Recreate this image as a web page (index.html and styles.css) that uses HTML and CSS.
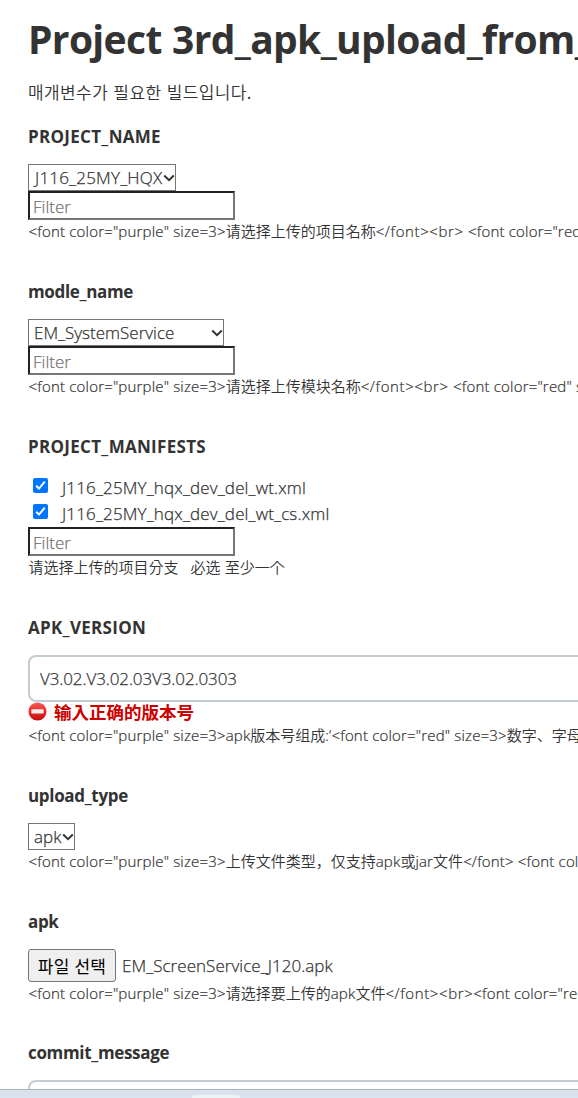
FILE: index.html
```
<!DOCTYPE html>
<html lang="ko">
<head>
<meta charset="utf-8">
<title>Project 3rd_apk_upload</title>
<link rel="stylesheet" href="styles.css">
</head>
<body>
<main class="form">
  <h1 class="title">Project 3rd_apk_upload_from_</h1>
  <p class="intro">매개변수가 필요한 빌드입니다.</p>

  <section class="field">
    <h2 class="label caps">PROJECT_NAME</h2>
    <div class="select project"><span>J116_25MY_HQX</span><svg class="arrow" viewBox="0 0 12 8"><path d="M1.2 1.5 6 6.2l4.8-4.7"/></svg></div>
    <input class="filter" placeholder="Filter">
    <p class="desc"><span class="l">&lt;font color="purple" size=3&gt;</span>请选择上传的项目名称<span class="l end">&lt;/font&gt;&lt;br&gt; </span><span class="l">&lt;font color="red</span></p>
  </section>

  <section class="field">
    <h2 class="label">modle_name</h2>
    <div class="select module"><span>EM_SystemService</span><svg class="arrow" viewBox="0 0 12 8"><path d="M1.2 1.5 6 6.2l4.8-4.7"/></svg></div>
    <input class="filter" placeholder="Filter">
    <p class="desc"><span class="l">&lt;font color="purple" size=3&gt;</span>请选择上传模块名称<span class="l end">&lt;/font&gt;&lt;br&gt; </span><span class="l">&lt;font color="red" s</span></p>
  </section>

  <section class="field">
    <h2 class="label caps">PROJECT_MANIFESTS</h2>
    <div class="checks">
      <label class="check"><svg class="box" viewBox="0 0 15 15"><rect width="15" height="15" rx="2"/><path d="M3.2 7.8 6 10.6l5.8-7"/></svg><span>J116_25MY_hqx_dev_del_wt.xml</span></label>
      <label class="check"><svg class="box" viewBox="0 0 15 15"><rect width="15" height="15" rx="2"/><path d="M3.2 7.8 6 10.6l5.8-7"/></svg><span>J116_25MY_hqx_dev_del_wt_cs.xml</span></label>
    </div>
    <input class="filter" placeholder="Filter">
    <p class="desc">请选择上传的项目分支<span class="gap-wide"></span>必选<span class="gap"></span>至少一个</p>
  </section>

  <section class="field">
    <h2 class="label caps">APK_VERSION</h2>
    <input class="text" value="V3.02.V3.02.03V3.02.0303">
    <p class="error"><svg class="stop" viewBox="0 0 20 20"><defs><linearGradient id="red" x1="0" y1="0" x2="0" y2="1"><stop offset="0" stop-color="#fb5a58"/><stop offset=".5" stop-color="#ea2a2a"/><stop offset="1" stop-color="#c01010"/></linearGradient></defs><circle cx="10" cy="10" r="9.5" fill="url(#red)"/><rect x="3.5" y="7.6" width="13" height="4.4" rx=".8" fill="#f4eeee"/></svg><span>输入正确的版本号</span></p>
    <p class="desc"><span class="l">&lt;font color="purple" size=3&gt;apk</span>版本号组成<span class="l">:‘&lt;font color="red" size=3&gt;</span>数字、字母</p>
  </section>

  <section class="field">
    <h2 class="label">upload_type</h2>
    <div class="select type"><span>apk</span><svg class="arrow" viewBox="0 0 12 8"><path d="M1.2 1.5 6 6.2l4.8-4.7"/></svg></div>
    <p class="desc"><span class="l">&lt;font color="purple" size=3&gt;</span>上传文件类型，仅支持<span class="l">apk</span>或<span class="l">jar</span>文件<span class="l">&lt;/font&gt; &lt;font col</span></p>
  </section>

  <section class="field">
    <h2 class="label">apk</h2>
    <div class="file"><button class="choose">파일 선택</button><span>EM_ScreenService_J120.apk</span></div>
    <p class="desc short"><span class="l">&lt;font color="purple" size=3&gt;</span>请选择要上传的<span class="l">apk</span>文件<span class="l end">&lt;/font&gt;&lt;br&gt;</span><span class="l">&lt;font color="red</span></p>
  </section>

  <section class="field">
    <h2 class="label">commit_message</h2>
    <input class="text">
  </section>
</main>
<footer class="taskbar"><span class="tab"></span></footer>
</body>
</html>
```

FILE: styles.css
```
* { box-sizing: border-box; }
body {
  margin: 0;
  height: 1098px;
  overflow: hidden;
  display: flex;
  flex-direction: column;
  background: #fff;
  color: #333;
  font-family: "Open Sans", "Noto Sans CJK KR", sans-serif;
  font-size: 17px;
}
h1, h2, p { margin: 0; white-space: nowrap; }
.form { height: 1089px; flex: none; padding-left: 28px; overflow: hidden; }
.title { height: 80px; line-height: 78px; font-size: 39px; font-weight: 700; letter-spacing: -0.66px; word-spacing: 1px; }
.intro { height: 45px; line-height: 23px; font-family: "Noto Sans CJK KR", sans-serif; font-size: 17px; font-weight: 350; letter-spacing: 0.4px; }
.field { display: flex; flex-direction: column; align-items: flex-start; margin-bottom: 36px; }
.label { height: 24px; line-height: 24px; margin-bottom: 15px; font-size: 17px; font-weight: 700; letter-spacing: -0.33px; }
.caps { letter-spacing: 0.3px; }
.field:first-of-type .label { line-height: 23px; }
.select { height: 27px; border: 1px solid #767676; display: flex; align-items: center; justify-content: space-between; padding-left: 5px; font-weight: 300; -webkit-text-stroke: 0.25px; white-space: nowrap; line-height: 27px; }
.project { width: 148px; letter-spacing: 0.2px; }
.module { width: 196px; }
.type { width: 47px; }
.project span { padding-left: 1px; }
.arrow { width: 12px; height: 8px; flex: none; fill: none; stroke: #333; stroke-width: 2; }
.filter { width: 207px; height: 29px; padding: 3px 2px 1px 3px; border: 2px inset #767676; font: 300 17px "Open Sans", sans-serif; -webkit-text-stroke: 0.25px; border-radius: 0; }
.filter::placeholder { color: #757575; }
.desc { height: 24px; line-height: 22px; padding-left: 0.6px; font-family: "Noto Sans CJK SC", sans-serif; font-size: 15px; font-weight: 350; }
.short { height: 23px; }
.l { font-family: "Open Sans", sans-serif; font-weight: 300; letter-spacing: 0.18px; -webkit-text-stroke: 0.22px; }
.end { letter-spacing: 0.6px; }
.gap-wide { display: inline-block; width: 12px; }
.gap { display: inline-block; width: 4px; }
.checks { height: 53px; }
.check { display: flex; align-items: center; height: 26px; padding-left: 5px; gap: 14px; font-weight: 300; -webkit-text-stroke: 0.25px; letter-spacing: 0.15px; white-space: nowrap; }
.box { width: 15px; height: 15px; margin-top: -3px; fill: #0075ff; }
.box path { fill: none; stroke: #fff; stroke-width: 2; }
.text { width: 620px; height: 47px; padding: 0 10px; border: 2px solid #c3ccd1; border-radius: 8px; color: #333; font: 300 17px "Open Sans", sans-serif; -webkit-text-stroke: 0.25px; letter-spacing: -0.1px; }
.error { display: flex; align-items: center; height: 22px; gap: 7px; color: #c00; font: 700 17.5px/18px "Noto Sans CJK SC", sans-serif; padding-bottom: 3px; }
.stop { width: 19px; height: 19px; }
.file { display: flex; align-items: center; height: 33px; gap: 6px; font-weight: 300; -webkit-text-stroke: 0.25px; letter-spacing: 0.04px; white-space: nowrap; }
.choose { width: 88px; height: 33px; padding: 0; border: 1px solid #767676; border-radius: 3px; background: #efefef; color: #000; font: 400 17px "Noto Sans CJK KR", sans-serif; letter-spacing: 0.2px; -webkit-text-stroke: 0; }
.taskbar { height: 9px; flex: none; display: flex; align-items: flex-end; background: #d9e2ed; border-top: 1px solid #a9b4bf; }
.tab { width: 48px; height: 3px; margin-left: 192px; background: #eef3f8; border-radius: 3px 3px 0 0; }
```
